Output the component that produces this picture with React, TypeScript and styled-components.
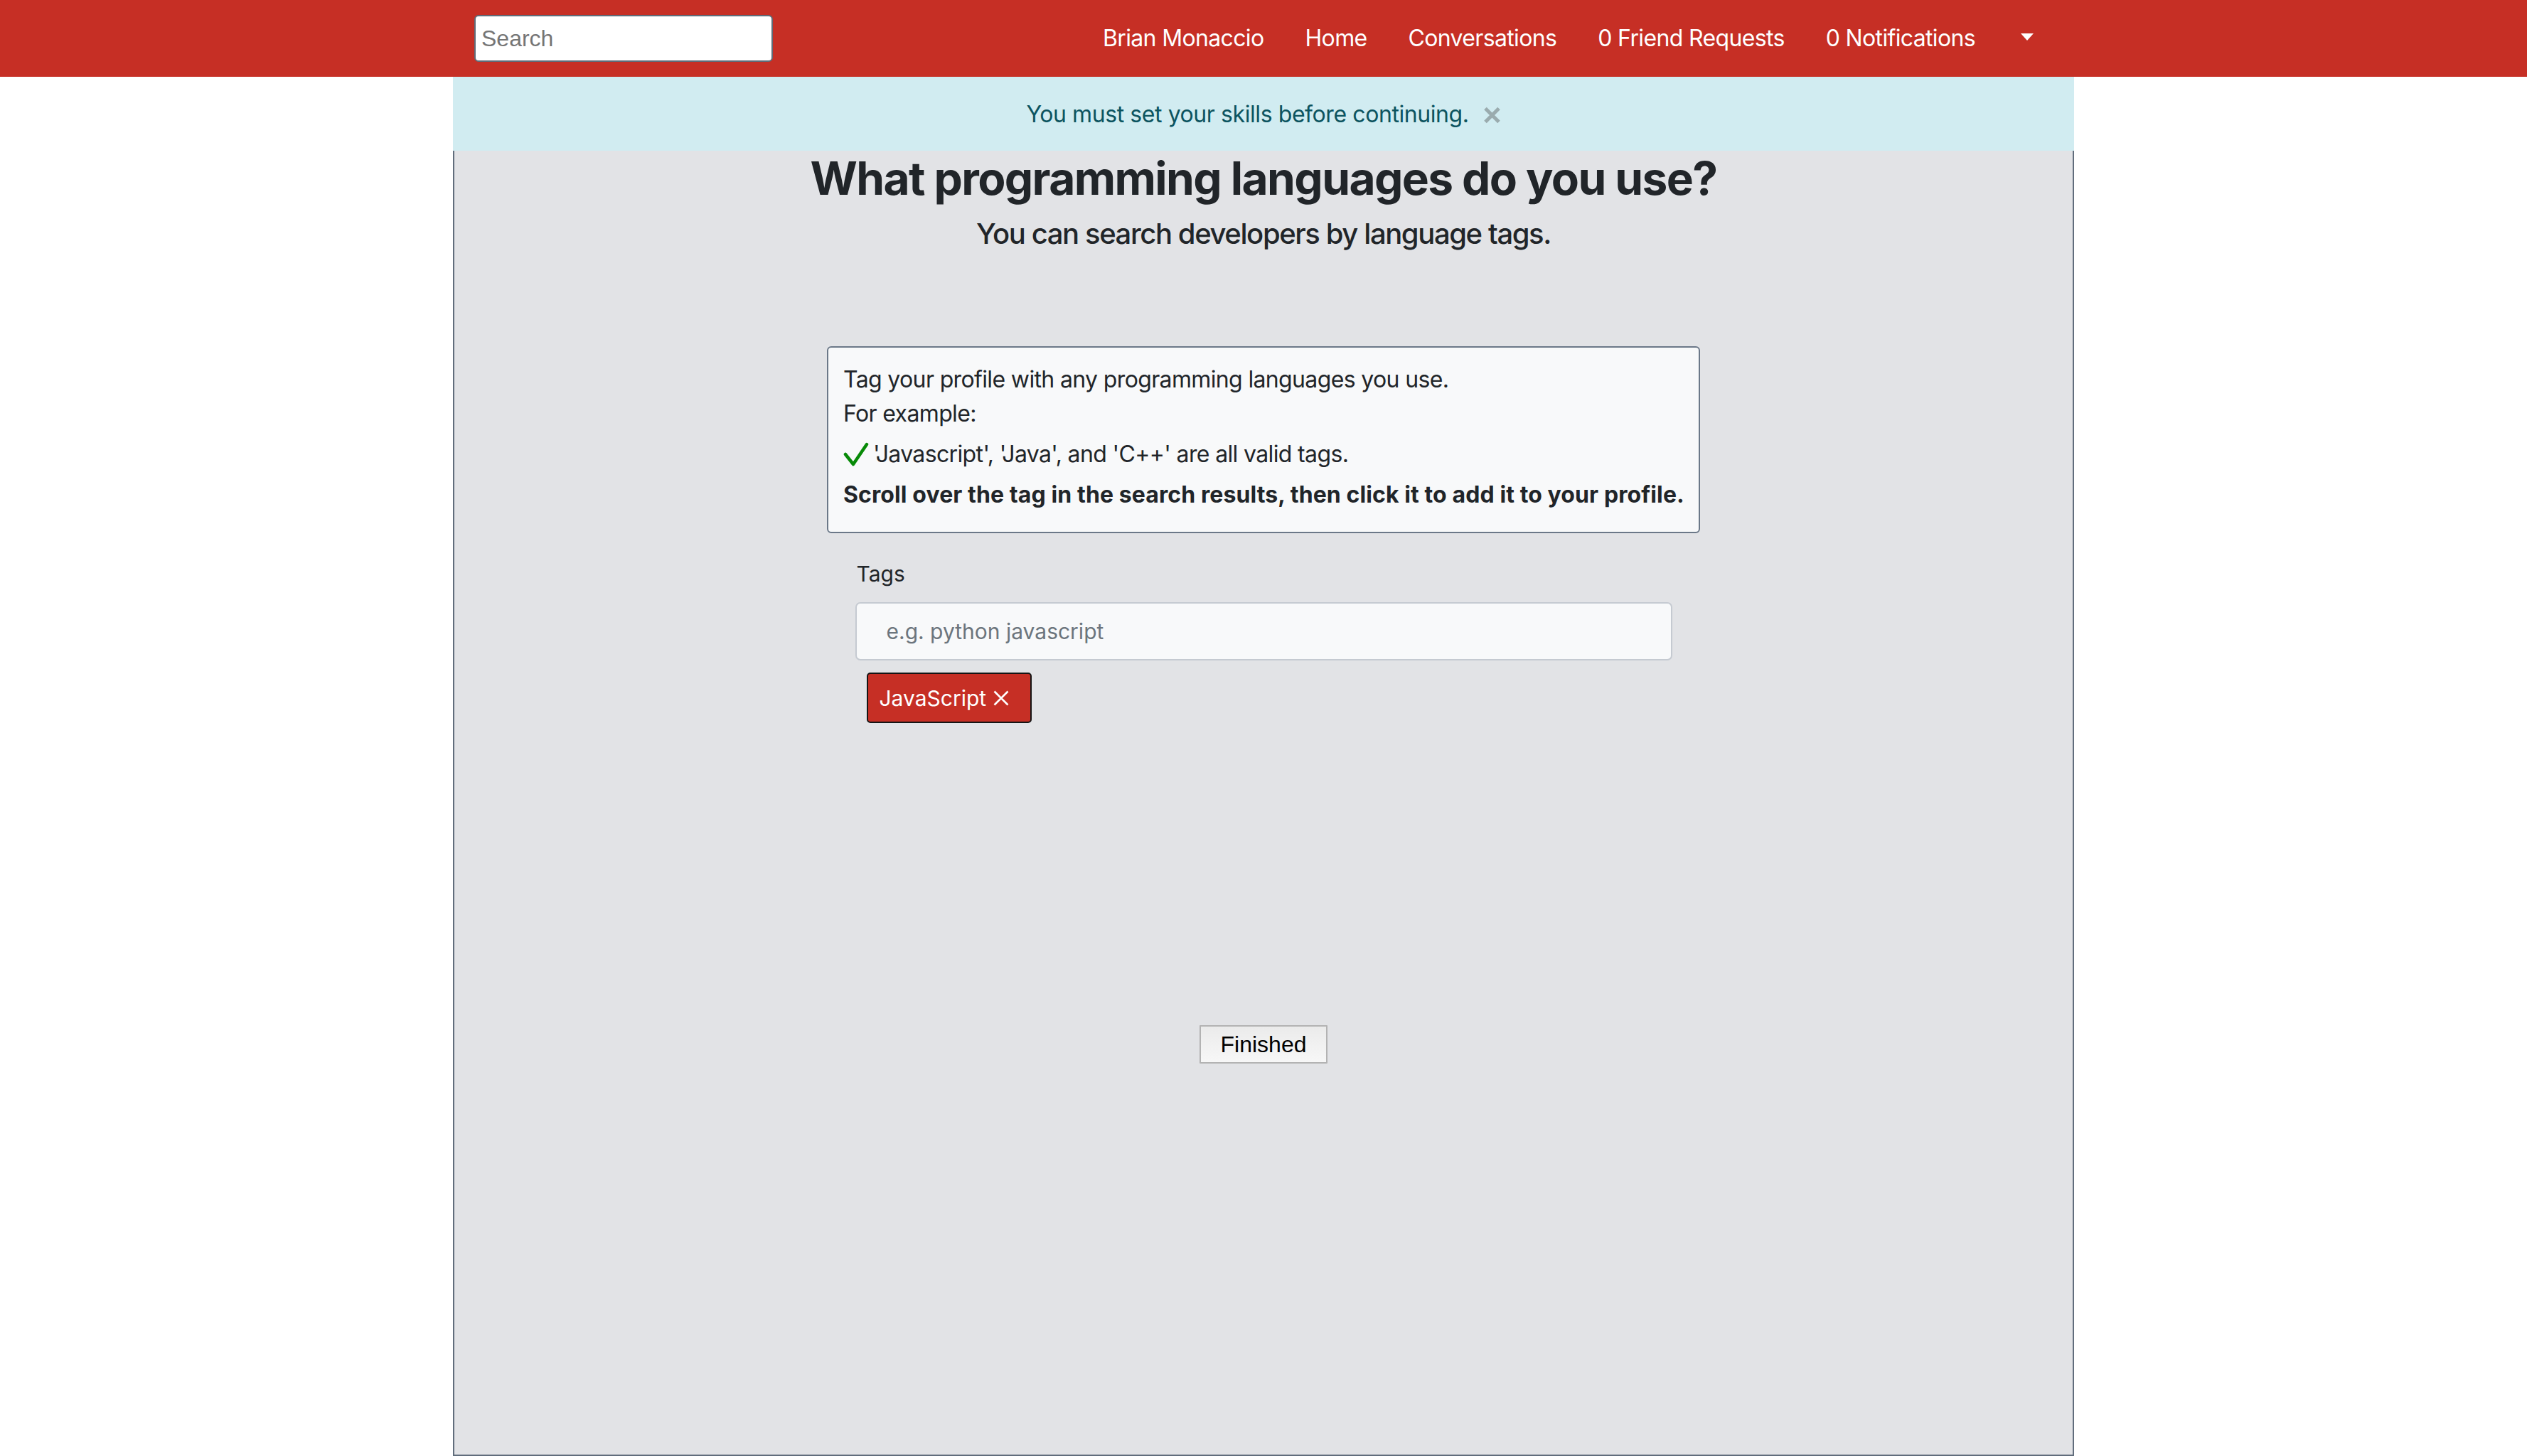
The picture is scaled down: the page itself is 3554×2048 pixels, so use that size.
import React from "react";
import styled, { createGlobalStyle } from "styled-components";

const GlobalStyle = createGlobalStyle`
  html, body { margin: 0; padding: 0; background: #ffffff; }
  body {
    font-family: Inter, "Noto Sans", "Liberation Sans", sans-serif;
    color: #212529;
    -webkit-font-smoothing: antialiased;
  }
  * { box-sizing: border-box; }
`;

const Navbar = styled.nav`
  background: #c62f25;
  height: 108px;
`;

const NavInner = styled.div`
  width: 2280px;
  margin: 0 auto;
  padding: 0 30px;
  height: 100%;
  display: flex;
  align-items: center;
`;

const SearchInput = styled.input`
  width: 420px;
  height: 66px;
  border: 2px solid #5f6b78;
  border-radius: 6px;
  background: #ffffff;
  padding: 0 8px;
  font-family: "Liberation Sans", Arial, sans-serif;
  font-size: 32px;
  color: #222;
  outline: none;
  &::placeholder { color: #757575; }
`;

const NavList = styled.ul`
  list-style: none;
  margin: 0 0 0 auto;
  padding: 0;
  display: flex;
  align-items: center;
`;

const NavLink = styled.li`
  color: #ffffff;
  font-size: 32px;
  line-height: 48px;
  letter-spacing: -0.65px;
  padding: 0 29px;
  white-space: nowrap;
  display: flex;
  align-items: center;
`;

const Caret = styled.span`
  display: inline-block;
  width: 0;
  height: 0;
  border-top: 10px solid #ffffff;
  border-left: 9px solid transparent;
  border-right: 9px solid transparent;
  margin: -4px -2px 0 6px;
`;

const Container = styled.main`
  width: 2280px;
  margin: 0 auto;
`;

const Alert = styled.div`
  background: #d1ecf1;
  color: #0c5460;
  height: 104px;
  display: flex;
  align-items: center;
  justify-content: center;
  font-size: 32px;
  letter-spacing: -0.42px;
`;

const CloseButton = styled.span`
  display: inline-flex;
  margin-left: 20px;
  margin-top: 4px;
`;

const Panel = styled.section`
  background: #e2e3e6;
  border: 2px solid #616d7c;
  border-top: none;
  height: 1836px;
  display: flex;
  flex-direction: column;
  align-items: center;
`;

const Title = styled.h2`
  margin: 0 0 16px;
  font-size: 64px;
  line-height: 77px;
  font-weight: 700;
  color: #212529;
  letter-spacing: -1.6px;
`;

const Subtitle = styled.h5`
  margin: 0;
  font-size: 40px;
  line-height: 48px;
  font-weight: 500;
  color: #212529;
  letter-spacing: -1.4px;
`;

const InfoBox = styled.div`
  margin-top: 134px;
  width: 1228px;
  border: 2px solid #6b7888;
  border-radius: 6px;
  background: #f8f9fa;
  padding: 21px 18px 28px 21px;
  font-size: 32px;
  line-height: 48px;
`;

const InfoLine = styled.div<{ $gap?: number; $bold?: boolean }>`
  margin-top: ${(p) => p.$gap ?? 0}px;
  font-weight: ${(p) => (p.$bold ? 700 : 400)};
  letter-spacing: ${(p) => (p.$bold ? "0.1px" : "-0.64px")};
  display: flex;
  align-items: center;
  white-space: nowrap;
`;

const CheckIcon = styled.svg`
  width: 36px;
  height: 34px;
  margin-right: 6px;
  flex: none;
`;

const TagsSection = styled.div`
  margin-top: 35px;
  width: 1149px;
  display: flex;
  flex-direction: column;
  align-items: flex-start;
`;

const TagsLabel = styled.label`
  font-size: 30px;
  line-height: 45px;
  padding-left: 2px;
  color: #212529;
`;

const TagsInput = styled.input`
  margin-top: 17px;
  width: 100%;
  height: 82px;
  border: 2px solid #c5cad1;
  border-radius: 7px;
  background: #f8f9fa;
  padding: 0 42px;
  font-family: Inter, "Noto Sans", sans-serif;
  font-size: 30px;
  color: #212529;
  outline: none;
  &::placeholder { color: #6c757d; }
`;

const Chip = styled.button`
  margin: 17px 0 0 16px;
  height: 71px;
  display: inline-flex;
  align-items: center;
  gap: 10px;
  padding: 0 30px 0 16px;
  background: #c62f25;
  border: 2px solid #151515;
  border-radius: 5px;
  color: #ffffff;
  font-family: Inter, "Noto Sans", sans-serif;
  font-size: 30px;
  cursor: pointer;
`;

const FinishedButton = styled.button`
  margin-top: 425px;
  width: 180px;
  height: 54px;
  border: 2px solid #b3b3b3;
  border-radius: 1px;
  background: linear-gradient(#ebebeb, #f7f7f7);
  font-family: "Liberation Sans", Arial, sans-serif;
  font-size: 32px;
  color: #000000;
  padding: 0;
  cursor: pointer;
`;

export default function App() {
  return (
    <>
      <GlobalStyle />
      <Navbar>
        <NavInner>
          <SearchInput placeholder="Search" />
          <NavList>
            <NavLink>Brian Monaccio</NavLink>
            <NavLink>Home</NavLink>
            <NavLink>Conversations</NavLink>
            <NavLink>0 Friend Requests</NavLink>
            <NavLink>0 Notifications</NavLink>
            <NavLink>
              <Caret />
            </NavLink>
          </NavList>
        </NavInner>
      </Navbar>
      <Container>
        <Alert>
          You must set your skills before continuing.
          <CloseButton>
            <svg width="25" height="24" viewBox="0 0 25 24">
              <path d="M3 2.5 L22 21.5 M22 2.5 L3 21.5" stroke="#9aabae" strokeWidth="5" />
            </svg>
          </CloseButton>
        </Alert>
        <Panel>
          <Title>What programming languages do you use?</Title>
          <Subtitle>You can search developers by language tags.</Subtitle>
          <InfoBox>
            <InfoLine>Tag your profile with any programming languages you use.</InfoLine>
            <InfoLine>For example:</InfoLine>
            <InfoLine $gap={9}>
              <CheckIcon viewBox="0 0 36 34">
                <path
                  d="M3 17 L14 31 L33 3"
                  fill="none"
                  stroke="#078a07"
                  strokeWidth="4.5"
                  strokeLinecap="round"
                  strokeLinejoin="round"
                />
              </CheckIcon>
              'Javascript', 'Java', and 'C++' are all valid tags.
            </InfoLine>
            <InfoLine $gap={9} $bold>
              Scroll over the tag in the search results, then click it to add it to your profile.
            </InfoLine>
          </InfoBox>
          <TagsSection>
            <TagsLabel>Tags</TagsLabel>
            <TagsInput placeholder="e.g. python javascript" />
            <Chip>
              JavaScript
              <svg width="22" height="22" viewBox="0 0 22 22">
                <path d="M1.5 1.5 L20.5 20.5 M20.5 1.5 L1.5 20.5" stroke="#ffffff" strokeWidth="2.6" />
              </svg>
            </Chip>
          </TagsSection>
          <FinishedButton>Finished</FinishedButton>
        </Panel>
      </Container>
    </>
  );
}
